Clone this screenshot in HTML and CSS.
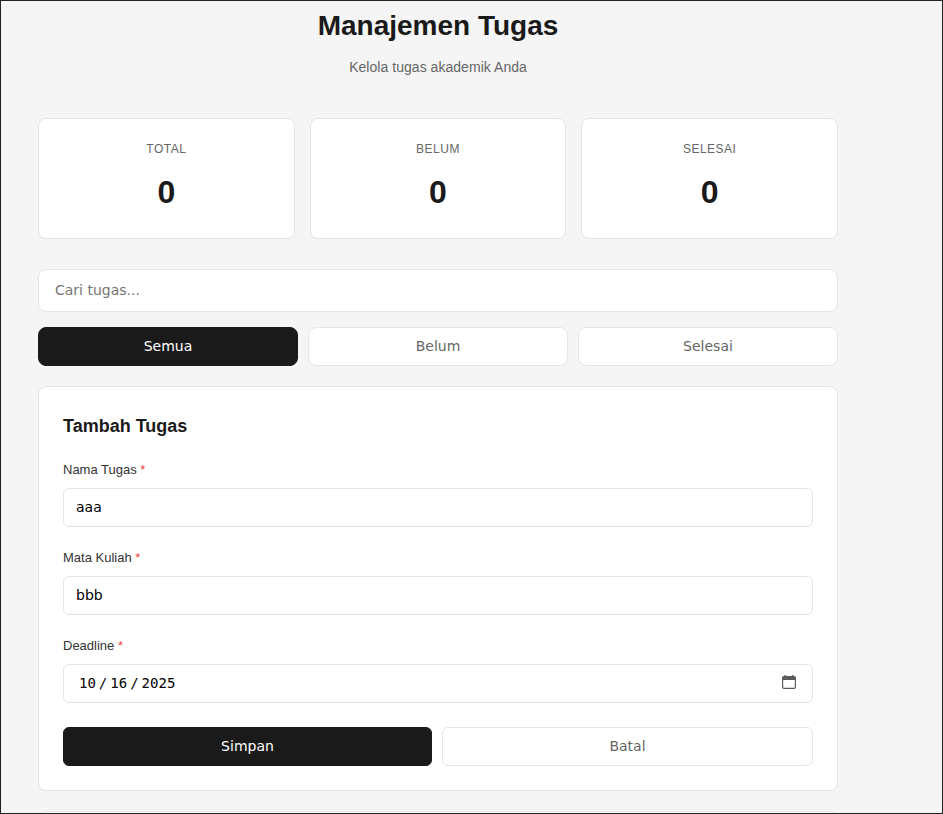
FILE: index.html
```html
<!DOCTYPE html>
<html lang="id">
<head>
<meta charset="utf-8">
<title>Manajemen Tugas</title>
<link rel="stylesheet" href="styles.css">
</head>
<body>
<div class="container">
  <header class="header">
    <h1>Manajemen Tugas</h1>
    <p>Kelola tugas akademik Anda</p>
  </header>
  <section class="stats">
    <div class="stat"><div class="stat-label">TOTAL</div><div class="stat-value">0</div></div>
    <div class="stat"><div class="stat-label">BELUM</div><div class="stat-value">0</div></div>
    <div class="stat"><div class="stat-label">SELESAI</div><div class="stat-value">0</div></div>
  </section>
  <input class="search" type="text" placeholder="Cari tugas...">
  <div class="filters">
    <button class="btn active">Semua</button>
    <button class="btn">Belum</button>
    <button class="btn">Selesai</button>
  </div>
  <form class="card">
    <h2>Tambah Tugas</h2>
    <div class="field"><label>Nama Tugas <span>*</span></label><input type="text" value="aaa"></div>
    <div class="field"><label>Mata Kuliah <span>*</span></label><input type="text" value="bbb"></div>
    <div class="field">
      <label>Deadline <span>*</span></label>
      <div class="date">
        <b>10</b><i>/</i><b>16</b><i>/</i><b>2025</b>
        <svg width="14" height="14" viewBox="0 0 14 14"><path d="M2.5 1V0h1.3v1h6.4V0h1.3v1H12a2 2 0 0 1 2 2v9a2 2 0 0 1-2 2H2a2 2 0 0 1-2-2V3a2 2 0 0 1 2-2zM1.2 5v7q0 .8.8.8h10q.8 0 .8-.8V5z" fill="#5b5b5b" fill-rule="evenodd"/></svg>
      </div>
    </div>
    <div class="actions">
      <button type="button" class="btn active">Simpan</button>
      <button type="button" class="btn">Batal</button>
    </div>
  </form>
  <div class="list"><div class="list-card"></div></div>
</div>
</body>
</html>
```
FILE: styles.css
```css
* { margin: 0; padding: 0; box-sizing: border-box; }
html { height: 814px; overflow: hidden; }
body {
  height: 814px;
  overflow: hidden;
  border: 1px solid #222;
  background: #f5f5f5;
  color: #1a1a1a;
  font-family: "Liberation Sans", Arial, sans-serif;
  line-height: 1.6;
}
.container { width: 800px; margin-left: 37px; }
.header { height: 117px; text-align: center; padding-top: 3px; }
.header h1 { font-size: 28px; font-weight: 600; margin-bottom: 7px; }
.header p { font-size: 14px; color: #666; letter-spacing: 0.04px; }
.stats { display: grid; grid-template-columns: repeat(3, 1fr); gap: 15px; margin-bottom: 30px; }
.stat { height: 121px; padding: 21px 20px 19px; background: #fff; border: 1px solid #e5e5e5; border-radius: 8px; text-align: center; }
.stat-label { font-size: 12px; color: #666; letter-spacing: 0.5px; margin-bottom: 8px; }
.stat-value { font-size: 32px; font-weight: 600; }
input, .btn { font-family: "DejaVu Sans", sans-serif; font-size: 14px; border: 1px solid #e5e5e5; background: #fff; }
.search { display: block; width: 100%; height: 43px; padding: 11px 16px 13px; border-radius: 8px; margin-bottom: 15px; }
.filters { display: flex; gap: 10px; margin-bottom: 20px; }
.btn { flex: 1; height: 39px; padding: 9px 10px 11px; border-radius: 8px; color: #666; }
.btn.active { background: #1a1a1a; border-color: #1a1a1a; color: #fff; }
.card { height: 405px; padding: 25px 24px 23px; background: #fff; border: 1px solid #e5e5e5; border-radius: 8px; margin-bottom: 20px; }
.card h2 { font-size: 18px; line-height: 29px; font-weight: 600; margin-bottom: 18px; }
.field { height: 69px; margin-bottom: 19px; }
.field label { display: block; font-size: 13px; line-height: 21px; color: #333; margin-bottom: 8px; }
.field span { color: #ef4444; }
.field input { display: block; width: 100%; height: 39px; padding: 9px 12px 11px; border-radius: 6px; }
.date { display: flex; align-items: center; height: 39px; padding: 0 16px 2px 14px; border: 1px solid #e5e5e5; border-radius: 6px; font: 14px "DejaVu Sans Mono", monospace; color: #000; }
.date b, .date i { font-weight: 400; font-style: normal; }
.date b { padding: 0 1px; }
.date i { padding: 0 2px; }
.date svg { margin: 0 0 2px auto; }
.actions { display: flex; gap: 10px; margin-top: 23px; }
.actions .btn { flex: none; width: 371px; border-radius: 6px; }
.actions .active { width: 369px; }
.list { height: 2px; overflow: hidden; }
.list-card { height: 60px; background: #fff; border: 1px solid #e5e5e5; border-radius: 8px; }
```
